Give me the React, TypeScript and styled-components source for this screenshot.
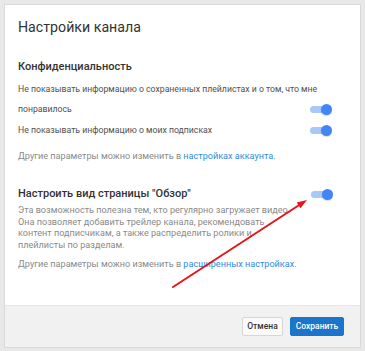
import React from "react";
import styled, { createGlobalStyle } from "styled-components";

const Global = createGlobalStyle`
  html, body { margin: 0; padding: 0; }
  body {
    background: #e8e8e8;
    font-family: Roboto, "Liberation Sans", Arial, sans-serif;
    width: 365px;
    height: 351px;
    overflow: hidden;
  }
`;

const Page = styled.div`
  position: relative;
  width: 365px;
  height: 351px;
  padding: 4px 0 0 4px;
  box-sizing: border-box;
`;

const Dialog = styled.div`
  width: 357px;
  height: 344px;
  box-sizing: border-box;
  background: #fff;
  border: 1px solid #d9d9d9;
  display: flex;
  flex-direction: column;
`;

const Body = styled.div`
  flex: 1;
  padding: 12px 26px 0 13px;
  display: flex;
  flex-direction: column;
`;

const Title = styled.h1`
  margin: 0;
  font-size: 14.2px;
  line-height: 20px;
  font-weight: 400;
  color: #333;
`;

const SectionTitle = styled.h2<{ $top: number }>`
  margin: ${(p) => p.$top}px 0 0;
  font-size: 11px;
  line-height: 16px;
  font-weight: 500;
  color: #333;
`;

const Row = styled.div<{ $top: number }>`
  margin-top: ${(p) => p.$top}px;
  display: grid;
  grid-template-columns: 1fr auto;
  font-size: 8.7px;
  line-height: 20px;
  color: #505050;
`;

const RowText = styled.span`
  grid-row: 1;
  grid-column: 1 / span 2;
`;

const RowToggle = styled.div`
  grid-row: 1;
  grid-column: 2;
  align-self: end;
  margin: 0 2px 4px 0;
`;

const Note = styled.p<{ $top: number }>`
  margin: ${(p) => p.$top}px 0 0;
  font-size: 9.1px;
  line-height: 14px;
  color: #8a8a8a;
`;

const Link = styled.a`
  color: #2f8ce0;
  text-decoration: none;
`;

const Feature = styled.div`
  margin-top: 23px;
  display: flex;
  align-items: flex-start;
  justify-content: space-between;
`;

const FeatureText = styled.div`
  width: 275px;
`;

const Description = styled.p`
  margin: 3px 0 0;
  font-size: 9.1px;
  line-height: 11.5px;
  color: #8a8a8a;
`;

const FeatureToggle = styled.div`
  margin: 3px 1px 0 0;
`;

const Track = styled.div`
  position: relative;
  width: 22px;
  height: 11px;
  display: flex;
  align-items: center;
`;

const TrackBar = styled.div`
  width: 20px;
  height: 7px;
  border-radius: 4px;
  background: #a9c8f7;
`;

const Knob = styled.div`
  position: absolute;
  right: 0;
  top: 0;
  width: 11px;
  height: 11px;
  border-radius: 50%;
  background: #4285f4;
  box-shadow: 0 1px 1px rgba(0, 0, 0, 0.15);
`;

const Footer = styled.div`
  height: 40px;
  background: #f1f1f1;
  border-top: 1px solid #e6e6e6;
  display: flex;
  align-items: center;
  justify-content: flex-end;
  gap: 7px;
  padding: 0 16px 1px 0;
`;

const Button = styled.button<{ $primary?: boolean }>`
  height: 19px;
  width: ${(p) => (p.$primary ? 54 : 41)}px;
  padding: 0;
  font-family: Roboto, "Liberation Sans", Arial, sans-serif;
  font-size: 8.5px;
  font-weight: 500;
  border-radius: 2px;
  border: 1px solid ${(p) => (p.$primary ? "#1a74c8" : "#d6d6d6")};
  background: ${(p) => (p.$primary ? "#1b76cb" : "#fafafa")};
  color: ${(p) => (p.$primary ? "#fff" : "#333")};
  cursor: pointer;
`;

const Overlay = styled.svg`
  position: absolute;
  left: 0;
  top: 0;
  pointer-events: none;
`;

const Toggle = () => (
  <Track>
    <TrackBar />
    <Knob />
  </Track>
);

export default function App() {
  return (
    <Page>
      <Global />
      <Dialog>
        <Body>
          <Title>Настройки канала</Title>
          <SectionTitle $top={22}>Конфиденциальность</SectionTitle>
          <Row $top={4}>
            <RowText>
              Не показывать информацию о сохраненных плейлистах и о том, что мне понравилось
            </RowText>
            <RowToggle>
              <Toggle />
            </RowToggle>
          </Row>
          <Row $top={1}>
            <RowText>Не показывать информацию о моих подписках</RowText>
            <RowToggle>
              <Toggle />
            </RowToggle>
          </Row>
          <Note $top={9}>
            Другие параметры можно изменить в <Link>настройках аккаунта</Link>.
          </Note>
          <Feature>
            <FeatureText>
              <SectionTitle $top={0}>Настроить вид страницы "Обзор"</SectionTitle>
              <Description>
                Эта возможность полезна тем, кто регулярно загружает видео. Она позволяет
                добавить трейлер канала, рекомендовать контент подписчикам, а также
                распределить ролики и плейлисты по разделам.
              </Description>
            </FeatureText>
            <FeatureToggle>
              <Toggle />
            </FeatureToggle>
          </Feature>
          <Note $top={6}>
            Другие параметры можно изменить в <Link>расширенных настройках</Link>.
          </Note>
        </Body>
        <Footer>
          <Button>Отмена</Button>
          <Button $primary>Сохранить</Button>
        </Footer>
      </Dialog>
      <Overlay width="365" height="351" viewBox="0 0 365 351">
        <line x1="173" y1="287" x2="300" y2="204.5" stroke="#e8141a" strokeWidth="2" strokeLinecap="round" />
        <polygon points="307,200 300.5,208.3 296.7,202.5" fill="#e8141a" />
      </Overlay>
    </Page>
  );
}
